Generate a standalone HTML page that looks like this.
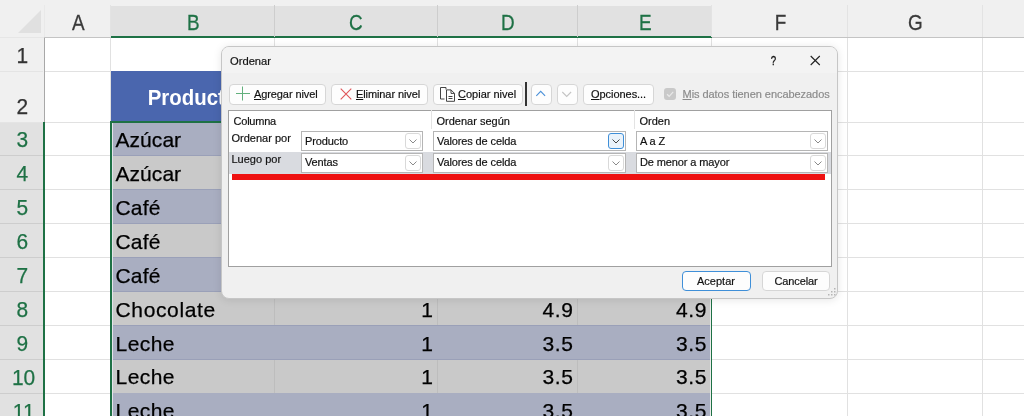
<!DOCTYPE html>
<html lang="es"><head><meta charset="utf-8"><title>Ordenar</title>
<style>
html,body{margin:0;padding:0;}
body{width:1024px;height:416px;overflow:hidden;background:#fff;position:relative;font-family:"Liberation Sans",sans-serif;}
.abs{position:absolute;}
.sheet{will-change:transform;position:absolute;left:0;top:0;width:1024px;height:416px;overflow:hidden;background:#fff;}
.colhead{position:absolute;top:5px;height:32px;line-height:35px;text-align:center;font-size:22.5px;color:#3a3a3a;}
.colhead span{display:inline-block;transform:translateX(0.7px) scaleX(0.84);-webkit-text-stroke:0.3px;}
.rowhead{position:absolute;left:0;width:44px;text-align:center;font-size:22.5px;color:#333;}
.rowhead span{display:inline-block;transform:scaleX(0.93);-webkit-text-stroke:0.25px;}
.sel{color:#1e7145;}
.cell{position:absolute;font-size:21px;color:#000;white-space:nowrap;letter-spacing:0.6px;-webkit-text-stroke:0.25px #000;}
.num{text-align:right;}
.dlg{will-change:transform;position:absolute;left:221px;top:46px;width:617px;height:252.6px;background:#f0f0f0;border:1px solid #c6c6c6;border-radius:8px;box-shadow:0 1px 9px rgba(0,0,0,0.10);font-size:11px;color:#1a1a1a;box-sizing:border-box;}
.btn{position:absolute;box-sizing:border-box;background:#fdfdfd;border:1px solid #d6d6d6;border-radius:4px;white-space:nowrap;}
.t{position:absolute;white-space:nowrap;line-height:14px;color:#111;-webkit-text-stroke:0.18px;}
.combo{position:absolute;box-sizing:border-box;background:#fff;border:1px solid #b5b5b5;height:20px;}
.combo .t{left:3px;top:1.5px;letter-spacing:-0.12px;}
.dd{position:absolute;right:1px;top:1px;width:16px;height:16px;box-sizing:border-box;border:1px solid #d9d9d9;border-radius:3px;background:#fff;}
u{text-decoration:underline;text-underline-offset:1px;}
</style></head><body>
<div class="sheet">

<div class="abs" style="left:0;top:0;width:1024px;height:37px;background:#f0f0f0;"></div>
<div class="abs" style="left:44px;top:37px;width:980px;height:1px;background:#c4c4c4;"></div>
<div class="abs" style="left:0;top:37px;width:44px;height:1px;background:#e6e6e6;"></div>
<div class="abs" style="left:0;top:38px;width:44px;height:378px;background:#f0f0f0;"></div>
<div class="abs" style="left:44px;top:38px;width:1px;height:84px;background:#a8a8a8;"></div>
<div class="abs" style="left:111px;top:5.5px;width:601px;height:31px;background:#e1e1e1;"></div>
<div class="abs" style="left:111px;top:35.7px;width:601px;height:1.9px;background:#1e7145;"></div>
<div class="abs" style="left:0;top:122px;width:43px;height:300px;background:#e1e1e1;"></div>
<div class="abs" style="left:43px;top:122px;width:2px;height:300px;background:#1e7145;"></div>
<svg class="abs" style="left:17px;top:9px" width="26" height="26"><polygon points="24,1 24,24 1,24" fill="#e0e0e0"/></svg>
<div class="colhead" style="left:44.5px;width:66.0px;"><span>A</span></div>
<div class="abs" style="left:110.0px;top:5px;width:1px;height:32px;background:#e3e3e3;"></div>
<div class="colhead sel" style="left:110.5px;width:163.5px;"><span>B</span></div>
<div class="abs" style="left:273.5px;top:5px;width:1px;height:32px;background:#cdcdcd;"></div>
<div class="colhead sel" style="left:274px;width:163px;"><span>C</span></div>
<div class="abs" style="left:436.5px;top:5px;width:1px;height:32px;background:#cdcdcd;"></div>
<div class="colhead sel" style="left:437px;width:140.5px;"><span>D</span></div>
<div class="abs" style="left:577.0px;top:5px;width:1px;height:32px;background:#cdcdcd;"></div>
<div class="colhead sel" style="left:577.5px;width:134.0px;"><span>E</span></div>
<div class="abs" style="left:711.0px;top:5px;width:1px;height:32px;background:#e3e3e3;"></div>
<div class="colhead" style="left:711.5px;width:136.0px;"><span>F</span></div>
<div class="abs" style="left:847.0px;top:5px;width:1px;height:32px;background:#e3e3e3;"></div>
<div class="colhead" style="left:847.5px;width:135.0px;"><span>G</span></div>
<div class="abs" style="left:982.0px;top:5px;width:1px;height:32px;background:#e3e3e3;"></div>
<div class="colhead" style="left:982.5px;width:137.5px;"><span>H</span></div>
<div class="abs" style="left:1119.5px;top:5px;width:1px;height:32px;background:#e3e3e3;"></div>
<div class="abs" style="left:44px;top:5px;width:1px;height:32px;background:#e9e9e9;"></div>
<div class="rowhead" style="top:36.50px;height:33px;line-height:37px;"><span>1</span></div>
<div class="abs" style="left:0;top:70.50px;width:43px;height:1px;background:#e4e4e4;"></div>
<div class="rowhead" style="top:87.50px;height:33px;line-height:37px;"><span>2</span></div>
<div class="abs" style="left:0;top:121.50px;width:43px;height:1px;background:#e4e4e4;"></div>
<div class="rowhead sel" style="top:121.43px;height:33px;line-height:37px;"><span>3</span></div>
<div class="abs" style="left:0;top:155.43px;width:43px;height:1px;background:#cdcdcd;"></div>
<div class="rowhead sel" style="top:155.36px;height:33px;line-height:37px;"><span>4</span></div>
<div class="abs" style="left:0;top:189.36px;width:43px;height:1px;background:#cdcdcd;"></div>
<div class="rowhead sel" style="top:189.29px;height:33px;line-height:37px;"><span>5</span></div>
<div class="abs" style="left:0;top:223.29px;width:43px;height:1px;background:#cdcdcd;"></div>
<div class="rowhead sel" style="top:223.22px;height:33px;line-height:37px;"><span>6</span></div>
<div class="abs" style="left:0;top:257.22px;width:43px;height:1px;background:#cdcdcd;"></div>
<div class="rowhead sel" style="top:257.15px;height:33px;line-height:37px;"><span>7</span></div>
<div class="abs" style="left:0;top:291.15px;width:43px;height:1px;background:#cdcdcd;"></div>
<div class="rowhead sel" style="top:291.08px;height:33px;line-height:37px;"><span>8</span></div>
<div class="abs" style="left:0;top:325.08px;width:43px;height:1px;background:#cdcdcd;"></div>
<div class="rowhead sel" style="top:325.01px;height:33px;line-height:37px;"><span>9</span></div>
<div class="abs" style="left:0;top:359.01px;width:43px;height:1px;background:#cdcdcd;"></div>
<div class="rowhead sel" style="top:358.94px;height:33px;line-height:37px;padding-left:1.3px;"><span>10</span></div>
<div class="abs" style="left:0;top:392.94px;width:43px;height:1px;background:#cdcdcd;"></div>
<div class="rowhead sel" style="top:392.87px;height:33px;line-height:37px;padding-left:1.3px;"><span>11</span></div>
<div class="abs" style="left:0;top:426.87px;width:43px;height:1px;background:#cdcdcd;"></div>
<div class="rowhead sel" style="top:426.80px;height:33px;line-height:37px;padding-left:1.3px;"><span>12</span></div>
<div class="abs" style="left:0;top:460.80px;width:43px;height:1px;background:#cdcdcd;"></div>
<div class="abs" style="left:45px;top:70.50px;width:979px;height:1px;background:#e1e1e1;"></div>
<div class="abs" style="left:45px;top:121.50px;width:979px;height:1px;background:#e1e1e1;"></div>
<div class="abs" style="left:45px;top:155.43px;width:979px;height:1px;background:#e1e1e1;"></div>
<div class="abs" style="left:45px;top:189.36px;width:979px;height:1px;background:#e1e1e1;"></div>
<div class="abs" style="left:45px;top:223.29px;width:979px;height:1px;background:#e1e1e1;"></div>
<div class="abs" style="left:45px;top:257.22px;width:979px;height:1px;background:#e1e1e1;"></div>
<div class="abs" style="left:45px;top:291.15px;width:979px;height:1px;background:#e1e1e1;"></div>
<div class="abs" style="left:45px;top:325.08px;width:979px;height:1px;background:#e1e1e1;"></div>
<div class="abs" style="left:45px;top:359.01px;width:979px;height:1px;background:#e1e1e1;"></div>
<div class="abs" style="left:45px;top:392.94px;width:979px;height:1px;background:#e1e1e1;"></div>
<div class="abs" style="left:45px;top:426.87px;width:979px;height:1px;background:#e1e1e1;"></div>
<div class="abs" style="left:45px;top:460.80px;width:979px;height:1px;background:#e1e1e1;"></div>
<div class="abs" style="left:110.0px;top:38px;width:1px;height:378px;background:#e1e1e1;"></div>
<div class="abs" style="left:273.5px;top:38px;width:1px;height:378px;background:#e1e1e1;"></div>
<div class="abs" style="left:436.5px;top:38px;width:1px;height:378px;background:#e1e1e1;"></div>
<div class="abs" style="left:577.0px;top:38px;width:1px;height:378px;background:#e1e1e1;"></div>
<div class="abs" style="left:711.0px;top:38px;width:1px;height:378px;background:#e1e1e1;"></div>
<div class="abs" style="left:847.0px;top:38px;width:1px;height:378px;background:#e1e1e1;"></div>
<div class="abs" style="left:982.0px;top:38px;width:1px;height:378px;background:#e1e1e1;"></div>
<div class="abs" style="left:1119.5px;top:38px;width:1px;height:378px;background:#e1e1e1;"></div>
<div class="abs" style="left:111px;top:71px;width:600px;height:51px;background:#4a66ae;"></div>
<div class="abs" style="left:111px;top:71px;width:163px;height:51px;"><div class="abs" style="left:0;width:163px;top:14.4px;text-align:center;color:#fff;font-weight:bold;font-size:22px;line-height:26px;transform:scaleX(0.927);">Producto</div></div>
<div class="abs" style="left:111px;top:122.00px;width:600px;height:34.43px;background:#a9aec1;"></div>
<div class="abs" style="left:111px;top:155.43px;width:600px;height:1px;background:#9aa0b8;"></div>
<div class="cell" style="left:115.5px;top:120.93px;line-height:37px;height:33px;letter-spacing:0.05px;">Azúcar</div>
<div class="abs" style="left:111px;top:155.93px;width:600px;height:34.43px;background:#c9c9c9;"></div>
<div class="abs" style="left:111px;top:189.36px;width:600px;height:1px;background:#9aa0b8;"></div>
<div class="abs" style="left:273.5px;top:156.43px;width:1px;height:32.93px;background:#bdbdbd;"></div>
<div class="abs" style="left:436.5px;top:156.43px;width:1px;height:32.93px;background:#bdbdbd;"></div>
<div class="abs" style="left:577.0px;top:156.43px;width:1px;height:32.93px;background:#bdbdbd;"></div>
<div class="cell" style="left:115.5px;top:154.86px;line-height:37px;height:33px;letter-spacing:0.05px;">Azúcar</div>
<div class="abs" style="left:111px;top:189.86px;width:600px;height:34.43px;background:#a9aec1;"></div>
<div class="abs" style="left:111px;top:223.29px;width:600px;height:1px;background:#9aa0b8;"></div>
<div class="cell" style="left:115.5px;top:188.79px;line-height:37px;height:33px;letter-spacing:0.15px;">Café</div>
<div class="abs" style="left:111px;top:223.79px;width:600px;height:34.43px;background:#c9c9c9;"></div>
<div class="abs" style="left:111px;top:257.22px;width:600px;height:1px;background:#9aa0b8;"></div>
<div class="abs" style="left:273.5px;top:224.29px;width:1px;height:32.93px;background:#bdbdbd;"></div>
<div class="abs" style="left:436.5px;top:224.29px;width:1px;height:32.93px;background:#bdbdbd;"></div>
<div class="abs" style="left:577.0px;top:224.29px;width:1px;height:32.93px;background:#bdbdbd;"></div>
<div class="cell" style="left:115.5px;top:222.72px;line-height:37px;height:33px;letter-spacing:0.15px;">Café</div>
<div class="abs" style="left:111px;top:257.72px;width:600px;height:34.43px;background:#a9aec1;"></div>
<div class="abs" style="left:111px;top:291.15px;width:600px;height:1px;background:#9aa0b8;"></div>
<div class="cell" style="left:115.5px;top:256.65px;line-height:37px;height:33px;letter-spacing:0.15px;">Café</div>
<div class="abs" style="left:111px;top:291.65px;width:600px;height:34.43px;background:#c9c9c9;"></div>
<div class="abs" style="left:111px;top:325.08px;width:600px;height:1px;background:#9aa0b8;"></div>
<div class="abs" style="left:273.5px;top:292.15px;width:1px;height:32.93px;background:#bdbdbd;"></div>
<div class="abs" style="left:436.5px;top:292.15px;width:1px;height:32.93px;background:#bdbdbd;"></div>
<div class="abs" style="left:577.0px;top:292.15px;width:1px;height:32.93px;background:#bdbdbd;"></div>
<div class="cell" style="left:115.5px;top:290.58px;line-height:37px;height:33px;letter-spacing:0.65px;">Chocolate</div>
<div class="cell num" style="left:274px;width:159.5px;top:290.58px;line-height:37px;height:33px;">1</div>
<div class="cell num" style="left:437px;width:136.5px;top:290.58px;line-height:37px;height:33px;">4.9</div>
<div class="cell num" style="left:577px;width:130px;top:290.58px;line-height:37px;height:33px;">4.9</div>
<div class="abs" style="left:111px;top:325.58px;width:600px;height:34.43px;background:#a9aec1;"></div>
<div class="abs" style="left:111px;top:359.01px;width:600px;height:1px;background:#9aa0b8;"></div>
<div class="cell" style="left:115.5px;top:324.51px;line-height:37px;height:33px;letter-spacing:0.45px;">Leche</div>
<div class="cell num" style="left:274px;width:159.5px;top:324.51px;line-height:37px;height:33px;">1</div>
<div class="cell num" style="left:437px;width:136.5px;top:324.51px;line-height:37px;height:33px;">3.5</div>
<div class="cell num" style="left:577px;width:130px;top:324.51px;line-height:37px;height:33px;">3.5</div>
<div class="abs" style="left:111px;top:359.51px;width:600px;height:34.43px;background:#c9c9c9;"></div>
<div class="abs" style="left:111px;top:392.94px;width:600px;height:1px;background:#9aa0b8;"></div>
<div class="abs" style="left:273.5px;top:360.01px;width:1px;height:32.93px;background:#bdbdbd;"></div>
<div class="abs" style="left:436.5px;top:360.01px;width:1px;height:32.93px;background:#bdbdbd;"></div>
<div class="abs" style="left:577.0px;top:360.01px;width:1px;height:32.93px;background:#bdbdbd;"></div>
<div class="cell" style="left:115.5px;top:358.44px;line-height:37px;height:33px;letter-spacing:0.45px;">Leche</div>
<div class="cell num" style="left:274px;width:159.5px;top:358.44px;line-height:37px;height:33px;">1</div>
<div class="cell num" style="left:437px;width:136.5px;top:358.44px;line-height:37px;height:33px;">3.5</div>
<div class="cell num" style="left:577px;width:130px;top:358.44px;line-height:37px;height:33px;">3.5</div>
<div class="abs" style="left:111px;top:393.44px;width:600px;height:34.43px;background:#a9aec1;"></div>
<div class="abs" style="left:111px;top:426.87px;width:600px;height:1px;background:#9aa0b8;"></div>
<div class="cell" style="left:115.5px;top:392.37px;line-height:37px;height:33px;letter-spacing:0.45px;">Leche</div>
<div class="cell num" style="left:274px;width:159.5px;top:392.37px;line-height:37px;height:33px;">1</div>
<div class="cell num" style="left:437px;width:136.5px;top:392.37px;line-height:37px;height:33px;">3.5</div>
<div class="cell num" style="left:577px;width:130px;top:392.37px;line-height:37px;height:33px;">3.5</div>
<div class="abs" style="left:111px;top:427.37px;width:600px;height:34.43px;background:#c9c9c9;"></div>
<div class="abs" style="left:111px;top:460.80px;width:600px;height:1px;background:#9aa0b8;"></div>
<div class="abs" style="left:273.5px;top:427.87px;width:1px;height:32.93px;background:#bdbdbd;"></div>
<div class="abs" style="left:436.5px;top:427.87px;width:1px;height:32.93px;background:#bdbdbd;"></div>
<div class="abs" style="left:577.0px;top:427.87px;width:1px;height:32.93px;background:#bdbdbd;"></div>
<div class="cell" style="left:115.5px;top:426.30px;line-height:37px;height:33px;letter-spacing:0.45px;">Leche</div>
<div class="cell num" style="left:274px;width:159.5px;top:426.30px;line-height:37px;height:33px;">1</div>
<div class="cell num" style="left:437px;width:136.5px;top:426.30px;line-height:37px;height:33px;">3.5</div>
<div class="cell num" style="left:577px;width:130px;top:426.30px;line-height:37px;height:33px;">3.5</div>
<div class="abs" style="left:110px;top:121px;width:602px;height:2px;background:#1e7145;"></div>
<div class="abs" style="left:110px;top:121px;width:2px;height:300px;background:#1e7145;"></div>
<div class="abs" style="left:709.6px;top:123px;width:1.2px;height:300px;background:#ececec;"></div>
<div class="abs" style="left:112px;top:123px;width:0.8px;height:300px;background:#e4e4ea;"></div>
<div class="abs" style="left:710.7px;top:121px;width:1.8px;height:300px;background:#1e7145;"></div>
</div>
<div class="dlg">
<div class="abs" style="left:0;top:0;width:615px;height:25.5px;background:#f3f3f3;border-radius:7px 7px 0 0;"></div>
<div class="t" style="left:8px;top:7px;font-size:11.2px;">Ordenar</div>
<div class="t" style="left:547.7px;top:6.5px;font-size:12.5px;-webkit-text-stroke:0.3px #111;transform:scaleX(0.78);">?</div>
<svg class="abs" style="left:587px;top:8px" width="12" height="12"><path d="M1.7 1 L10.8 10 M10.8 1 L1.7 10" stroke="#222" stroke-width="1.1" fill="none"/></svg>
<div class="btn" style="left:7px;top:36.8px;width:97px;height:21.7px;"><svg class="abs" style="left:5px;top:1.4px" width="16" height="16"><path d="M1 7.5 H15 M7.5 0.5 V14.5" stroke="#62b07c" stroke-width="1" fill="none"/></svg><div class="t" style="left:24px;top:2px;letter-spacing:-0.1px;"><u>A</u>gregar nivel</div></div>
<div class="btn" style="left:109px;top:36.8px;width:97px;height:21.7px;"><svg class="abs" style="left:8px;top:3px" width="12" height="12"><path d="M0.7 0.7 L11.3 11.3 M11.3 0.7 L0.7 11.3" stroke="#e0565a" stroke-width="1.1" fill="none"/></svg><div class="t" style="left:24px;top:2px;letter-spacing:-0.1px;"><u>E</u>liminar nivel</div></div>
<div class="btn" style="left:211px;top:36.8px;width:90px;height:21.7px;"><svg class="abs" style="left:5px;top:1.2px" width="17" height="17"><path d="M7 3.5 V1.5 H1.5 V13 H5.5" stroke="#444" stroke-width="1" fill="none"/><path d="M7.5 3.9 H12 L15.5 7.4 V15.3 H7.5 Z" stroke="#444" stroke-width="1" fill="#fff"/><path d="M12 3.9 V7.4 H15.5 M9.5 10.5 H13.5 M9.5 12.5 H13.5" stroke="#444" stroke-width="1" fill="none"/></svg><div class="t" style="left:24px;top:2px;"><u>C</u>opiar nivel</div></div>
<div class="abs" style="left:303.4px;top:35px;width:1.6px;height:24.3px;background:#333;"></div>
<div class="btn" style="left:308.5px;top:36.8px;width:21.0px;height:21.7px;"><svg class="abs" style="left:3.3px;top:4.3px" width="12" height="10"><path d="M1.3 6.8 L5.7 2.4 L10.1 6.8" stroke="#4a90d9" stroke-width="1.1" fill="none"/></svg></div>
<div class="btn" style="left:334.5px;top:36.8px;width:21.0px;height:21.7px;"><svg class="abs" style="left:3.3px;top:4.6px" width="12" height="10"><path d="M1.3 3 L5.7 7.4 L10.1 3" stroke="#c4c4c4" stroke-width="1.1" fill="none"/></svg></div>
<div class="btn" style="left:360.5px;top:36.8px;width:71.0px;height:21.7px;"><div class="t" style="left:7.5px;top:2px;letter-spacing:-0.05px;"><u>O</u>pciones...</div></div>
<div class="abs" style="left:442px;top:41px;width:12px;height:12px;background:#c9c9c9;border-radius:3px;"><svg width="12" height="12"><path d="M3 6.2 L5.2 8.3 L9.2 3.8" stroke="#e9e9e9" stroke-width="1.2" fill="none"/></svg></div>
<div class="t" style="left:460.5px;top:39.5px;color:#8a8a8a;letter-spacing:-0.05px;"><u>M</u>is datos tienen encabezados</div>
<div class="abs" style="left:6px;top:63px;width:604px;height:157px;background:#fff;border:1px solid #a0a0a0;box-sizing:border-box;">
<div class="t" style="left:4.599999999999994px;top:3.200000000000003px;letter-spacing:-0.25px;">Columna</div>
<div class="t" style="left:207.5px;top:3.200000000000003px;">Ordenar según</div>
<div class="t" style="left:410.5px;top:3.200000000000003px;">Orden</div>
<div class="abs" style="left:202px;top:-1px;width:1px;height:19px;background:#e3e3e3;"></div>
<div class="abs" style="left:405px;top:-1px;width:1px;height:19px;background:#e3e3e3;"></div>
<div class="abs" style="left:0;top:41px;width:602px;height:22px;background:#d9dbe0;"></div>
<div class="combo" style="left:72px;top:20px;width:122px;"><div class="t" style="top:1.5px">Producto</div><div class="dd"><svg width="14" height="14"><path d="M3.5 5.5 L7 9 L10.5 5.5" stroke="#8a8a8a" stroke-width="1" fill="none"/></svg></div></div>
<div class="combo" style="left:204px;top:20px;width:193px;"><div class="t" style="top:1.5px">Valores de celda</div><div class="dd" style="border-color:#3f8fd8;background:#eaf3fb;"><svg width="14" height="14"><path d="M3.5 5.5 L7 9 L10.5 5.5" stroke="#444" stroke-width="1" fill="none"/></svg></div></div>
<div class="combo" style="left:407px;top:20px;width:192px;"><div class="t" style="top:1.5px">A a Z</div><div class="dd"><svg width="14" height="14"><path d="M3.5 5.5 L7 9 L10.5 5.5" stroke="#8a8a8a" stroke-width="1" fill="none"/></svg></div></div>
<div class="combo" style="left:72px;top:42px;width:122px;"><div class="t" style="top:0.9px">Ventas</div><div class="dd"><svg width="14" height="14"><path d="M3.5 5.5 L7 9 L10.5 5.5" stroke="#8a8a8a" stroke-width="1" fill="none"/></svg></div></div>
<div class="combo" style="left:204px;top:42px;width:193px;"><div class="t" style="top:0.9px">Valores de celda</div><div class="dd"><svg width="14" height="14"><path d="M3.5 5.5 L7 9 L10.5 5.5" stroke="#8a8a8a" stroke-width="1" fill="none"/></svg></div></div>
<div class="combo" style="left:407px;top:42px;width:192px;"><div class="t" style="top:0.9px">De menor a mayor</div><div class="dd"><svg width="14" height="14"><path d="M3.5 5.5 L7 9 L10.5 5.5" stroke="#8a8a8a" stroke-width="1" fill="none"/></svg></div></div>
<div class="t" style="left:2.5px;top:20.19999999999999px;">Ordenar por</div>
<div class="t" style="left:2.5px;top:41.30000000000001px;">Luego por</div>
<div class="abs" style="left:2.5px;top:63px;width:593px;height:5.6px;background:#ee1111;"></div>
</div>
<div class="btn" style="left:460px;top:223.5px;width:69px;height:20.5px;border:1.5px solid #3f8fd8;text-align:center;"><div class="t" style="left:0;width:66px;top:2px;text-align:center;">Aceptar</div></div>
<div class="btn" style="left:540px;top:223.5px;width:68px;height:20.5px;"><div class="t" style="left:0;width:66px;top:2.5px;text-align:center;letter-spacing:-0.15px;">Cancelar</div></div>
<svg class="abs" style="left:605px;top:240px" width="10" height="10"><g fill="#b5b5b5"><rect x="7" y="1" width="1.5" height="1.5"/><rect x="4" y="4" width="1.5" height="1.5"/><rect x="7" y="4" width="1.5" height="1.5"/><rect x="1" y="7" width="1.5" height="1.5"/><rect x="4" y="7" width="1.5" height="1.5"/><rect x="7" y="7" width="1.5" height="1.5"/></g></svg>
</div>
</body></html>
